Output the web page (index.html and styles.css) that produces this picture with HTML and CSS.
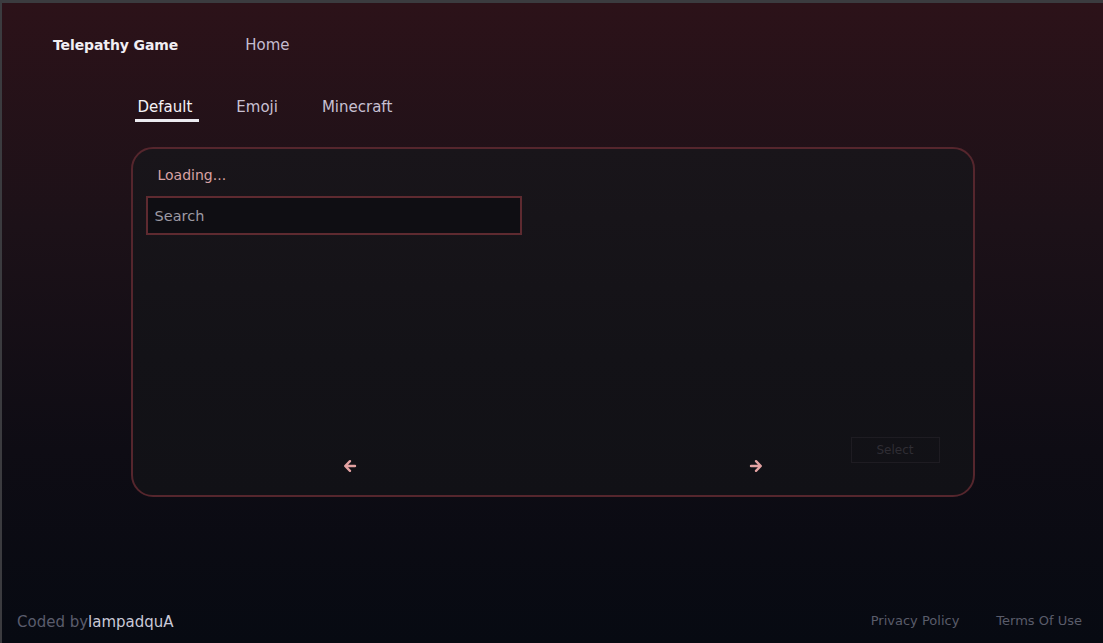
FILE: index.html
```html
<!DOCTYPE html>
<html>
<head>
<meta charset="utf-8">
<title>Telepathy Game</title>
<link rel="stylesheet" href="styles.css">
</head>
<body>
<div class="frame">
  <header class="topnav">
    <span class="brand">Telepathy Game</span>
    <a class="navlink">Home</a>
  </header>
  <main class="main">
    <nav class="tabs">
      <span class="tab active">Default</span>
      <span class="tab">Emoji</span>
      <span class="tab">Minecraft</span>
    </nav>
    <section class="card">
      <div class="loading">Loading...</div>
      <div class="search"><span class="placeholder">Search</span></div>
      <div class="grid"></div>
      <div class="controls">
        <span class="arrow left">
          <svg width="14" height="14" viewBox="0 0 14 14"><path d="M12 7H2.5M7 2.2L2.2 7 7 11.8" fill="none" stroke="#e3a2a2" stroke-width="2.4" stroke-linecap="round" stroke-linejoin="round"/></svg>
        </span>
        <span class="arrow right">
          <svg width="14" height="14" viewBox="0 0 14 14"><path d="M2 7h9.5M7 2.2L11.8 7 7 11.8" fill="none" stroke="#e3a2a2" stroke-width="2.4" stroke-linecap="round" stroke-linejoin="round"/></svg>
        </span>
        <span class="select">Select</span>
      </div>
    </section>
  </main>
  <footer class="footer">
    <div class="credit">Coded by<span class="author">lampadquA</span></div>
    <div class="links">
      <a class="flink">Privacy Policy</a>
      <a class="flink">Terms Of Use</a>
    </div>
  </footer>
</div>
</body>
</html>
```

FILE: styles.css
```css
* { box-sizing: border-box; }
html, body { margin: 0; padding: 0; height: 100%; }
body {
  font-family: "DejaVu Sans", "Open Sans", sans-serif;
  background: #3b3b3f;
}
.frame {
  height: 643px;
  border-top: 3px solid #3b3b3f;
  border-left: 2px solid #3b3b3f;
  background: linear-gradient(180deg, #2c1219 0%, #1c1118 35%, #0e0c14 70%, #070a12 100%);
  display: flex;
  flex-direction: column;
}
.topnav {
  display: flex;
  align-items: center;
  gap: 67px;
  padding: 33px 0 0 51px;
  height: 50px;
}
.brand {
  color: #f1eef3;
  font-weight: 700;
  font-size: 14px;
  letter-spacing: -0.1px;
}
.navlink {
  color: #c4bcd0;
  font-size: 15px;
}
.main {
  display: flex;
  flex-direction: column;
  align-items: center;
}
.tabs {
  width: 844px;
  display: flex;
  gap: 34px;
  padding: 0 0 0 4px;
  margin-top: 46px;
}
.tab {
  color: #c8c0d2;
  font-size: 15px;
  padding: 0 7px 3px 3px;
  border-bottom: 3px solid transparent;
  line-height: 17px;
}
.tab.active {
  color: #f4f2f6;
  border-bottom-color: #ecebf0;
}
.card {
  width: 844px;
  height: 350px;
  margin-top: 25px;
  border: 2px solid #55262d;
  border-radius: 22px;
  background: linear-gradient(180deg, #19151a 0%, #131217 60%, #111116 100%);
  padding: 16px 0 0 13px;
  display: flex;
  flex-direction: column;
}
.loading {
  color: #d9a2a3;
  font-size: 14px;
  padding-left: 12px;
  line-height: 20px;
}
.search {
  width: 376px;
  height: 39px;
  margin-top: 11px;
  border: 2px solid #5e2a30;
  background: #0f0e13;
  display: flex;
  align-items: center;
  padding-left: 7px;
}
.placeholder {
  color: #9d9aa3;
  font-size: 14.5px;
}
.grid { flex: 1; }
.controls {
  height: 58px;
  display: flex;
}
.arrow {
  width: 14px;
  height: 14px;
  margin-top: 22px;
  display: block;
}
.arrow svg { display: block; }
.arrow.left { margin-left: 197px; }
.arrow.right { margin-left: 392px; }
.select {
  margin-left: 88px;
  width: 89px;
  height: 26px;
  border: 1px solid #1e1c22;
  color: #2f2d34;
  font-size: 12px;
  display: flex;
  align-items: center;
  justify-content: center;
}
.footer {
  margin-top: auto;
  display: flex;
  justify-content: space-between;
  align-items: center;
  padding: 0 21px 12px 15px;
}
.credit {
  color: #5a5c6c;
  font-size: 15px;
}
.author { color: #c9c9d8; }
.links { display: flex; gap: 37px; margin-bottom: 3px; }
.flink {
  color: #5a5c6a;
  font-size: 13px;
}
```
